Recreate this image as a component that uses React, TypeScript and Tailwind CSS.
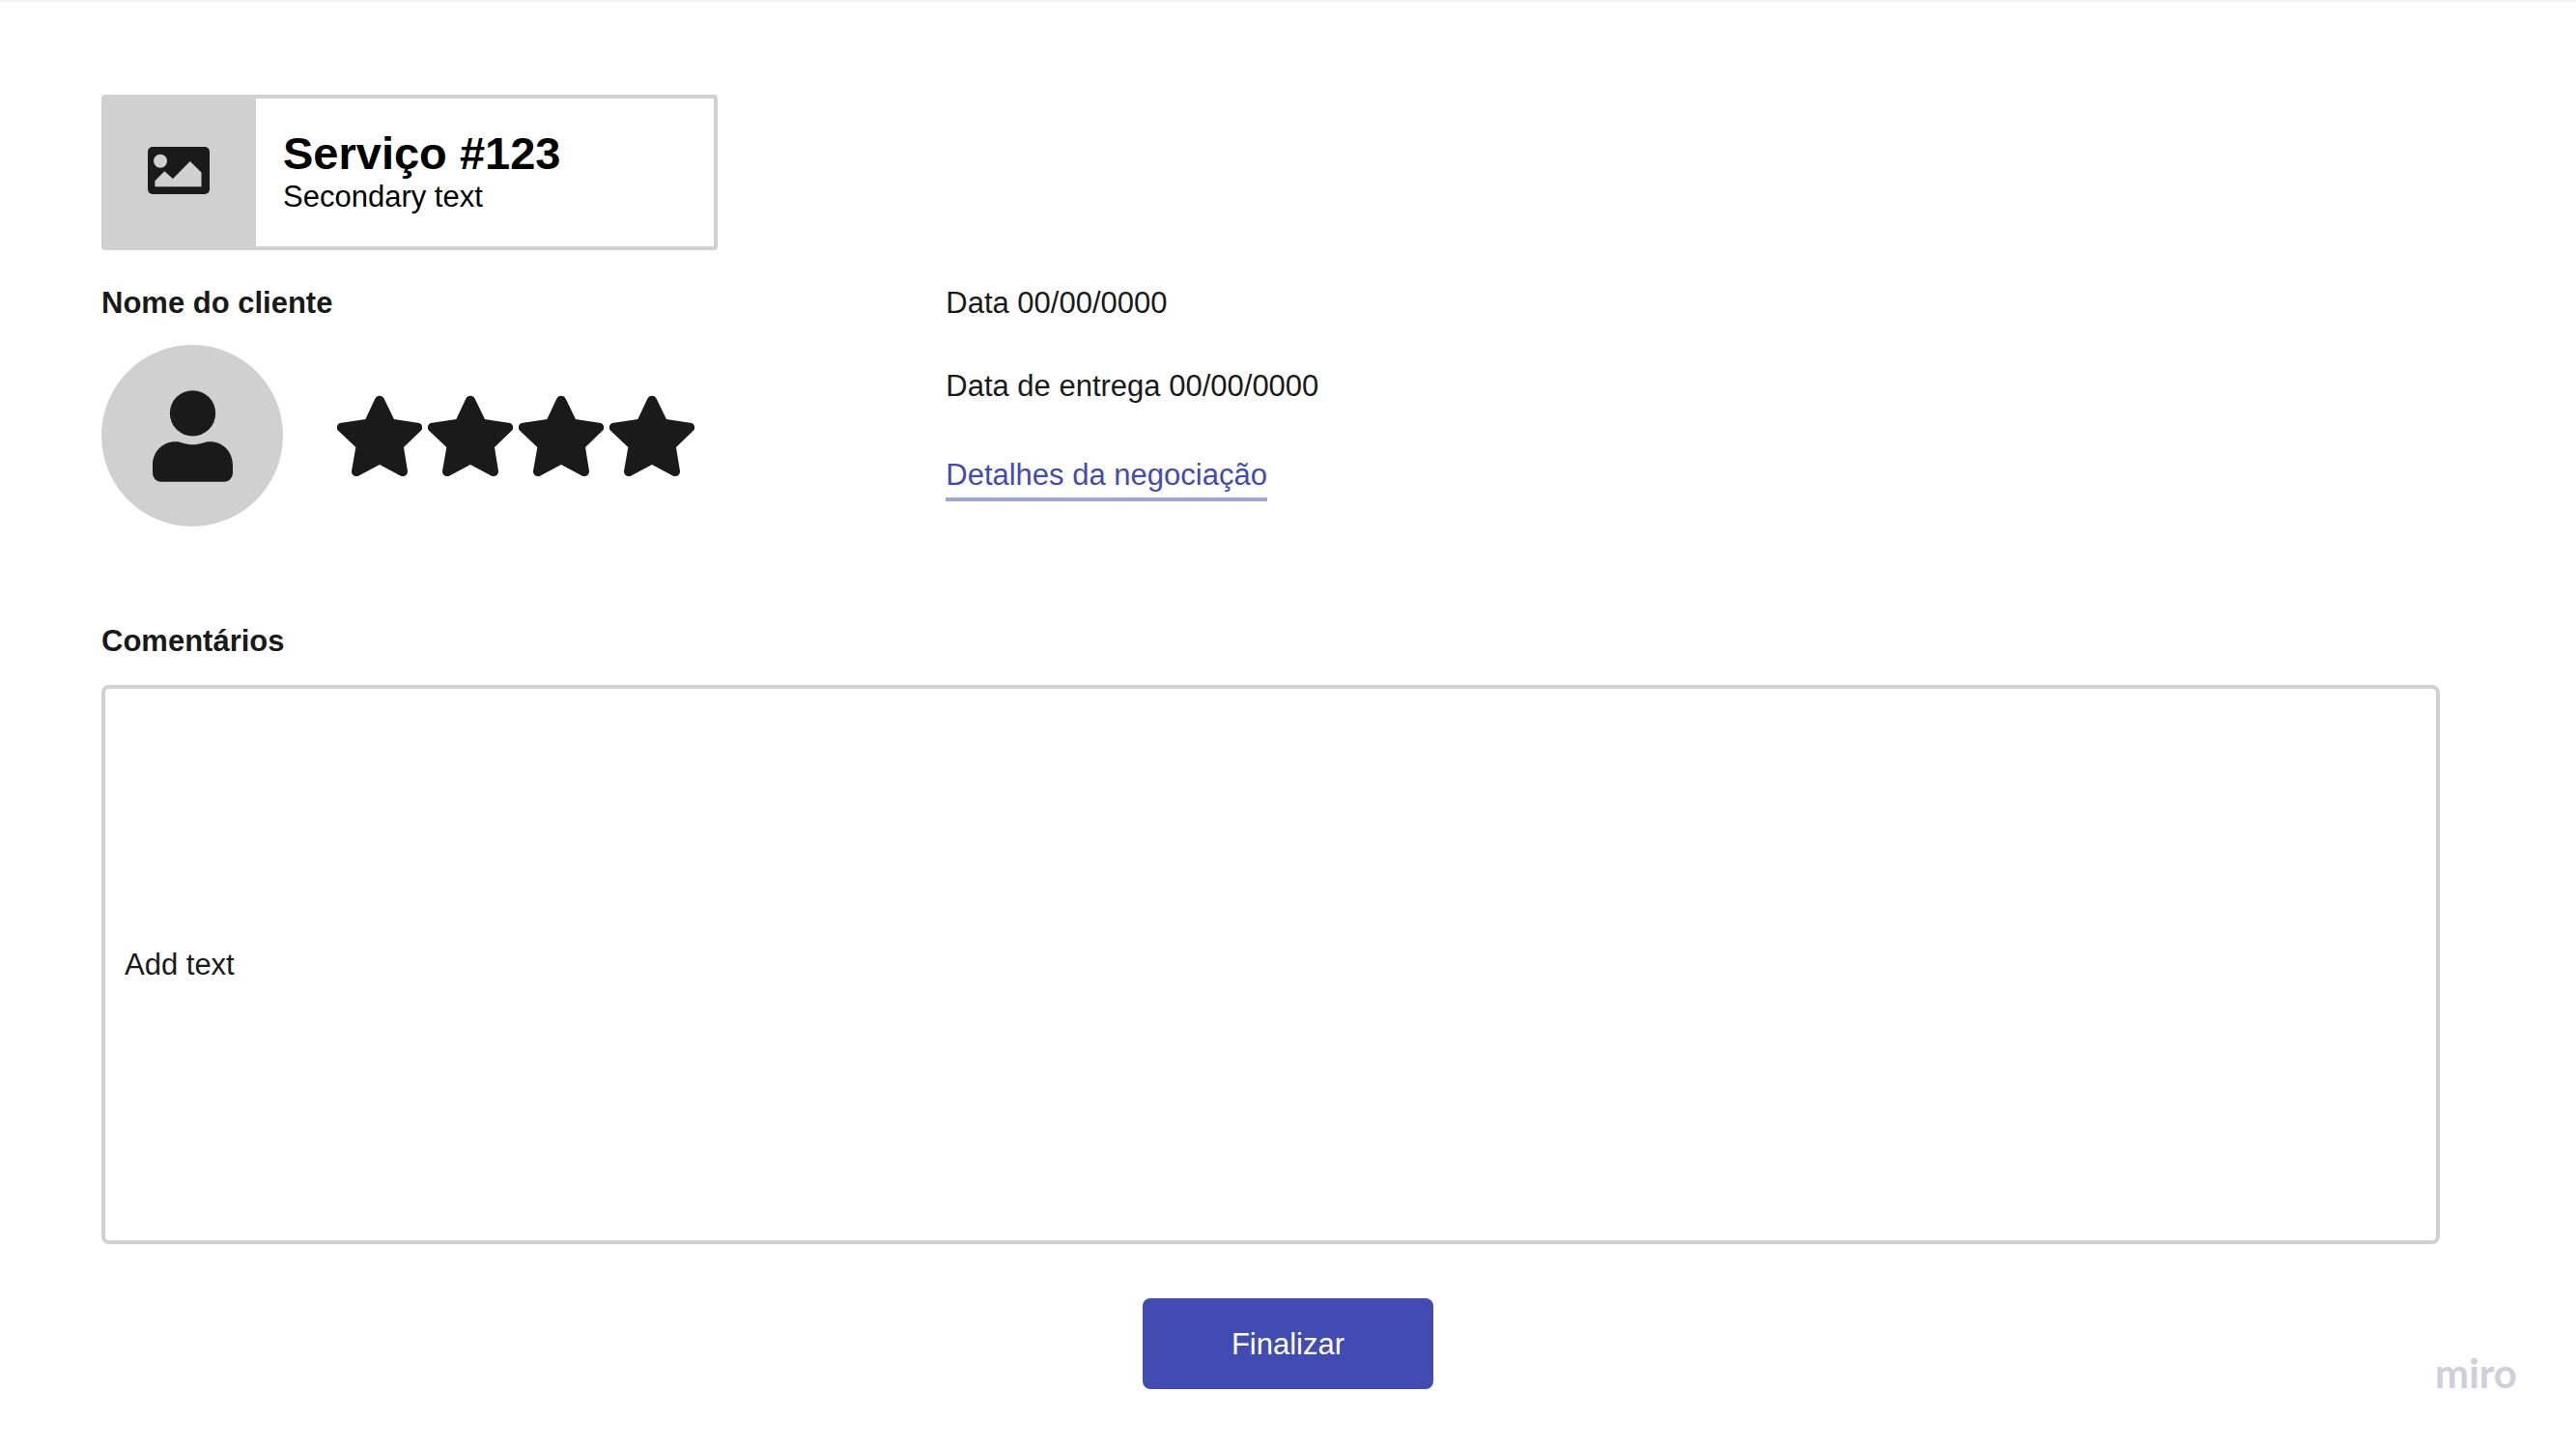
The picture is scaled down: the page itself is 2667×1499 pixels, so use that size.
import React from "react";

function ImageIcon() {
  return (
    <svg width="64" height="49" viewBox="0 0 64 49" aria-hidden="true">
      <rect width="64" height="49" rx="5" fill="#1a1a1a" />
      <circle cx="13" cy="14.7" r="7" fill="#d0d0d0" />
      <path d="M7.4 41.3V35.3L17.3 25.3L26 33L43.8 15L55.5 26.5V41.3Z" fill="#d0d0d0" />
    </svg>
  );
}

function PersonIcon() {
  return (
    <svg width="83" height="95" viewBox="204 373 249 284" fill="#1a1a1a" aria-hidden="true">
      <circle cx="328.500" cy="444" r="71" />
      <path d="M204 605C204 562 236 532 274 532C284 532 288 533 296 536C318 543 339 543 361 536C369 533 373 532 383 532C421 532 453 562 453 605V630A27 27 0 0 1 426 657H231A27 27 0 0 1 204 630Z" />
    </svg>
  );
}

function StarIcon() {
  return (
    <svg width="88" height="85" viewBox="30 57 264 255" fill="#1a1a1a" aria-hidden="true">
      <path d="M118 132L148 68A15.500 15.500 0 0 1 176 68L207 132L281 143A14.500 14.500 0 0 1 289 169L237 219L249 293A15 15 0 0 1 228 308L162 273L96 308A15 15 0 0 1 75 293L88 219L35 169A14.500 14.500 0 0 1 43 143Z" />
    </svg>
  );
}

const STARS = [1, 2, 3, 4];

export default function App() {
  return (
    <div className="flex min-h-screen flex-col border-t-2 border-[#f2f2f2] bg-white pt-24 pb-[61px] font-['Liberation_Sans',Arial,sans-serif] text-[31px] leading-[38px] text-[#1a1a1a]">
      <main className="flex flex-1 flex-col pr-[141px] pl-[105px]">
        <header className="flex h-[161px] w-[638px] max-w-full overflow-hidden rounded-[4px] border-4 border-[#d0d0d0]">
          <div className="flex w-[156px] shrink-0 items-center justify-center bg-[#d0d0d0] pr-1 pb-1">
            <ImageIcon />
          </div>
          <div className="flex flex-col justify-center pb-0.5 pl-7 text-black">
            <h1 className="text-[47px] leading-[52px] font-bold">Serviço #123</h1>
            <p>Secondary text</p>
          </div>
        </header>

        <div className="mt-9 grid grid-cols-[13fr_23fr]">
          <section>
            <h2 className="font-bold">Nome do cliente</h2>
            <div className="mt-6 flex items-center gap-14">
              <div className="flex size-[188px] items-center justify-center rounded-full bg-[#d0d0d0]">
                <PersonIcon />
              </div>
              <div className="flex gap-1.5" role="img" aria-label="4 estrelas">
                {STARS.map((n) => (
                  <StarIcon key={n} />
                ))}
              </div>
            </div>
          </section>
          <section className="flex flex-col items-start">
            <p>Data 00/00/0000</p>
            <p className="mt-12">Data de entrega 00/00/0000</p>
            <a href="#detalhes" className="mt-[54px] border-b-4 border-[#a0a4dc] pb-1 text-[#414bb2]">
              Detalhes da negociação
            </a>
          </section>
        </div>

        <label htmlFor="comentarios" className="mt-[100px] self-start font-bold">
          Comentários
        </label>
        <input
          id="comentarios"
          type="text"
          placeholder="Add text"
          className="mt-[26px] min-h-40 w-full flex-1 rounded-lg border-4 border-[#d0d0d0] px-5 placeholder:text-[#1a1a1a]"
        />
      </main>

      <footer className="mt-14 grid grid-cols-[1fr_auto_1fr] items-end">
        <button
          type="button"
          className="col-start-2 h-[94px] w-[301px] rounded-lg bg-[#414bb2] pt-0.5 text-white"
        >
          Finalizar
        </button>
        <span className="mr-[61px] justify-self-end font-['Lato',sans-serif] text-[42px] leading-[34px] font-bold text-[#d0cddc]">
          miro
        </span>
      </footer>
    </div>
  );
}
